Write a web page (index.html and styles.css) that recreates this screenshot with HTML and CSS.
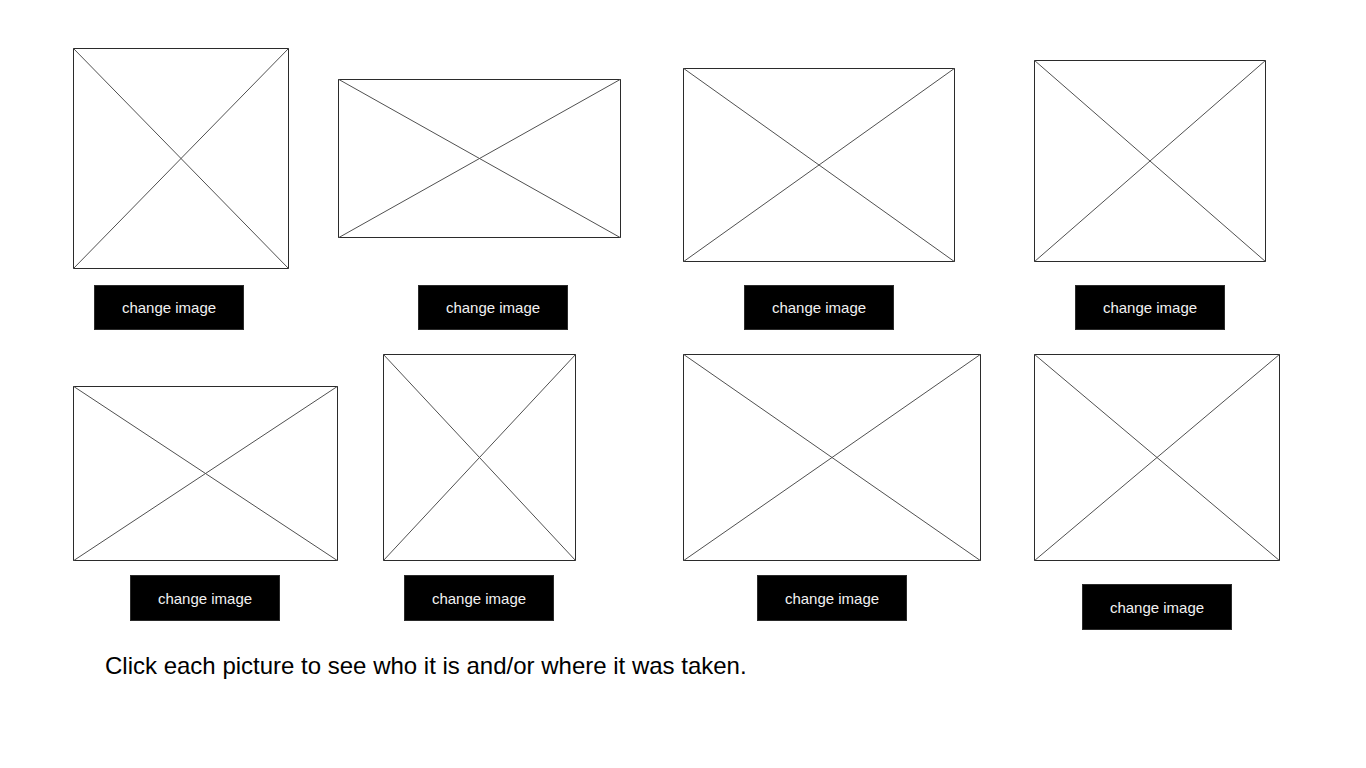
FILE: index.html
```html
<!DOCTYPE html>
<html lang="en">
<head>
<meta charset="utf-8">
<title>Pictures</title>
<link rel="stylesheet" href="styles.css">
</head>
<body>
<main class="page">
  <section class="gallery">
    <figure class="card c1">
      <div class="slot">
        <svg class="photo" width="216" height="221" viewBox="0 0 216 221"><rect x="0.5" y="0.5" width="215" height="220"/><line x1="0" y1="0" x2="216" y2="221"/><line x1="216" y1="0" x2="0" y2="221"/></svg>
      </div>
      <button class="change">change image</button>
    </figure>
    <figure class="card c2">
      <div class="slot">
        <svg class="photo" width="283" height="159" viewBox="0 0 283 159"><rect x="0.5" y="0.5" width="282" height="158"/><line x1="0" y1="0" x2="283" y2="159"/><line x1="283" y1="0" x2="0" y2="159"/></svg>
      </div>
      <button class="change">change image</button>
    </figure>
    <figure class="card c3">
      <div class="slot">
        <svg class="photo" width="272" height="194" viewBox="0 0 272 194"><rect x="0.5" y="0.5" width="271" height="193"/><line x1="0" y1="0" x2="272" y2="194"/><line x1="272" y1="0" x2="0" y2="194"/></svg>
      </div>
      <button class="change">change image</button>
    </figure>
    <figure class="card c4">
      <div class="slot">
        <svg class="photo" width="232" height="202" viewBox="0 0 232 202"><rect x="0.5" y="0.5" width="231" height="201"/><line x1="0" y1="0" x2="232" y2="202"/><line x1="232" y1="0" x2="0" y2="202"/></svg>
      </div>
      <button class="change">change image</button>
    </figure>

    <figure class="card c5 low">
      <div class="slot">
        <svg class="photo" width="265" height="175" viewBox="0 0 265 175"><rect x="0.5" y="0.5" width="264" height="174"/><line x1="0" y1="0" x2="265" y2="175"/><line x1="265" y1="0" x2="0" y2="175"/></svg>
      </div>
      <button class="change">change image</button>
    </figure>
    <figure class="card c6 low">
      <div class="slot">
        <svg class="photo" width="193" height="207" viewBox="0 0 193 207"><rect x="0.5" y="0.5" width="192" height="206"/><line x1="0" y1="0" x2="193" y2="207"/><line x1="193" y1="0" x2="0" y2="207"/></svg>
      </div>
      <button class="change">change image</button>
    </figure>
    <figure class="card c7 low">
      <div class="slot">
        <svg class="photo" width="298" height="207" viewBox="0 0 298 207"><rect x="0.5" y="0.5" width="297" height="206"/><line x1="0" y1="0" x2="298" y2="207"/><line x1="298" y1="0" x2="0" y2="207"/></svg>
      </div>
      <button class="change">change image</button>
    </figure>
    <figure class="card c8 low">
      <div class="slot">
        <svg class="photo" width="246" height="207" viewBox="0 0 246 207"><rect x="0.5" y="0.5" width="245" height="206"/><line x1="0" y1="0" x2="246" y2="207"/><line x1="246" y1="0" x2="0" y2="207"/></svg>
      </div>
      <button class="change">change image</button>
    </figure>
  </section>
  <p class="hint">Click each picture to see who it is and/or where it was taken.</p>
</main>
</body>
</html>
```

FILE: styles.css
```css
html, body {
  margin: 0;
  padding: 0;
  background: #ffffff;
}

body {
  font-family: "Liberation Sans", Arial, sans-serif;
  color: #000000;
}

.page {
  padding-top: 48px;
  padding-left: 73px;
}

.gallery {
  display: grid;
  grid-template-columns: 265px 345px 351px 332px;
  row-gap: 24px;
  align-items: start;
}

.card {
  margin: 0;
  display: flex;
  flex-direction: column;
  align-items: flex-start;
}

.slot {
  height: 237px;
  display: flex;
  align-items: flex-start;
}

.low .slot {
  height: 207px;
  align-items: flex-end;
}

.photo {
  display: block;
  cursor: pointer;
}

.photo rect {
  fill: #ffffff;
  stroke: #2b2b2b;
  stroke-width: 1;
}

.photo line {
  stroke: #505050;
  stroke-width: 1;
}

.change {
  width: 150px;
  height: 45px;
  margin: 0;
  padding: 0;
  border: 1px solid #2a2a2a;
  background: #000000;
  color: #f2f2f2;
  font-family: "Liberation Sans", Arial, sans-serif;
  font-size: 15px;
  display: flex;
  align-items: center;
  justify-content: center;
  cursor: pointer;
}

.low .change {
  margin-top: 14px;
  height: 46px;
}

/* per-card placement of the photo and its button */
.c1 .change { margin-left: 21px; }
.c2 .photo { margin-top: 31px; }
.c2 .change { margin-left: 80px; }
.c3 .photo { margin-top: 20px; }
.c3 .change { margin-left: 61px; }
.c4 .photo { margin-top: 12px; }
.c4 .change { margin-left: 41px; }
.c5 .change { margin-left: 57px; }
.c6 .photo { margin-left: 45px; }
.c6 .change { margin-left: 66px; }
.c7 .change { margin-left: 74px; }
.c8 .change { margin-left: 48px; margin-top: 23px; }

.hint {
  margin: 22px 0 0 32px;
  font-size: 24px;
  line-height: 27px;
}
```
